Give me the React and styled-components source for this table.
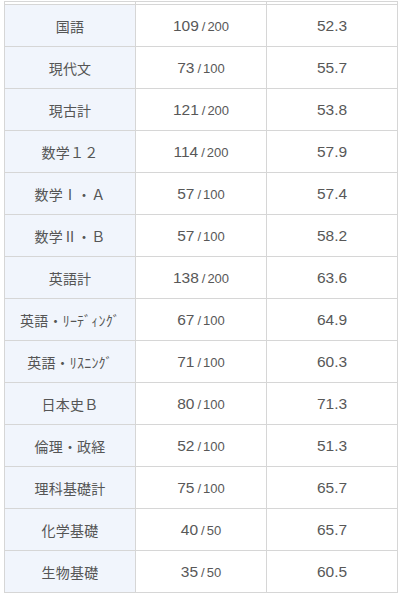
import React from "react";
import styled, { createGlobalStyle } from "styled-components";

const GlobalStyle = createGlobalStyle`
    body {
        margin: 0;
        background: #fff;
        font-family: "Liberation Sans", "Noto Sans CJK JP", sans-serif;
    }
`

const Wrapper = styled.div`
    width: 407px;
    height: 600px;
    overflow: hidden;
    padding-left: 4px;
    padding-top: 1px;
    box-sizing: border-box;
`

const Table = styled.table`
    border-collapse: collapse;
    table-layout: fixed;
    width: 394px;
`

const StubRow = styled.tr`
    height: 3px;
    td {
        padding: 0;
        height: 2px;
        border: 1px solid #d6d6d6;
    }
`

const Row = styled.tr`
    height: 42px;
`

const Label = styled.th`
    width: 131px;
    padding: 0;
    height: 41px;
    border: 1px solid #d6d6d6;
    background: #f1f5fc;
    color: #555;
    font-family: "Noto Sans CJK JP", sans-serif;
    font-weight: 400;
    font-size: 14px;
    text-align: center;
    white-space: nowrap;
    letter-spacing: 0.2px;
`

const Cell = styled.td`
    padding: 0;
    border: 1px solid #d6d6d6;
    color: #585858;
    font-size: 15.5px;
    text-align: center;
    white-space: nowrap;
`

const Slash = styled.span`
    font-size: 13px;
    margin: 0 2px 0 3px;
`

const Full = styled.span`
    font-size: 13px;
`

const rows = [
    ["国語", 109, 200, "52.3"],
    ["現代文", 73, 100, "55.7"],
    ["現古計", 121, 200, "53.8"],
    ["数学１２", 114, 200, "57.9"],
    ["数学Ⅰ・Ａ", 57, 100, "57.4"],
    ["数学Ⅱ・Ｂ", 57, 100, "58.2"],
    ["英語計", 138, 200, "63.6"],
    ["英語・ﾘｰﾃﾞｨﾝｸﾞ", 67, 100, "64.9"],
    ["英語・ﾘｽﾆﾝｸﾞ", 71, 100, "60.3"],
    ["日本史Ｂ", 80, 100, "71.3"],
    ["倫理・政経", 52, 100, "51.3"],
    ["理科基礎計", 75, 100, "65.7"],
    ["化学基礎", 40, 50, "65.7"],
    ["生物基礎", 35, 50, "60.5"],
];

export default function App() {
    return (
        <>
            <GlobalStyle />
            <Wrapper>
                <Table>
                    <tbody>
                        <StubRow>
                            <td />
                            <td />
                            <td />
                        </StubRow>
                        {rows.map(([name, score, full, dev]) => (
                            <Row key={name}>
                                <Label>{name}</Label>
                                <Cell>
                                    {score}
                                    <Slash>/</Slash>
                                    <Full>{full}</Full>
                                </Cell>
                                <Cell>{dev}</Cell>
                            </Row>
                        ))}
                    </tbody>
                </Table>
            </Wrapper>
        </>
    );
}
